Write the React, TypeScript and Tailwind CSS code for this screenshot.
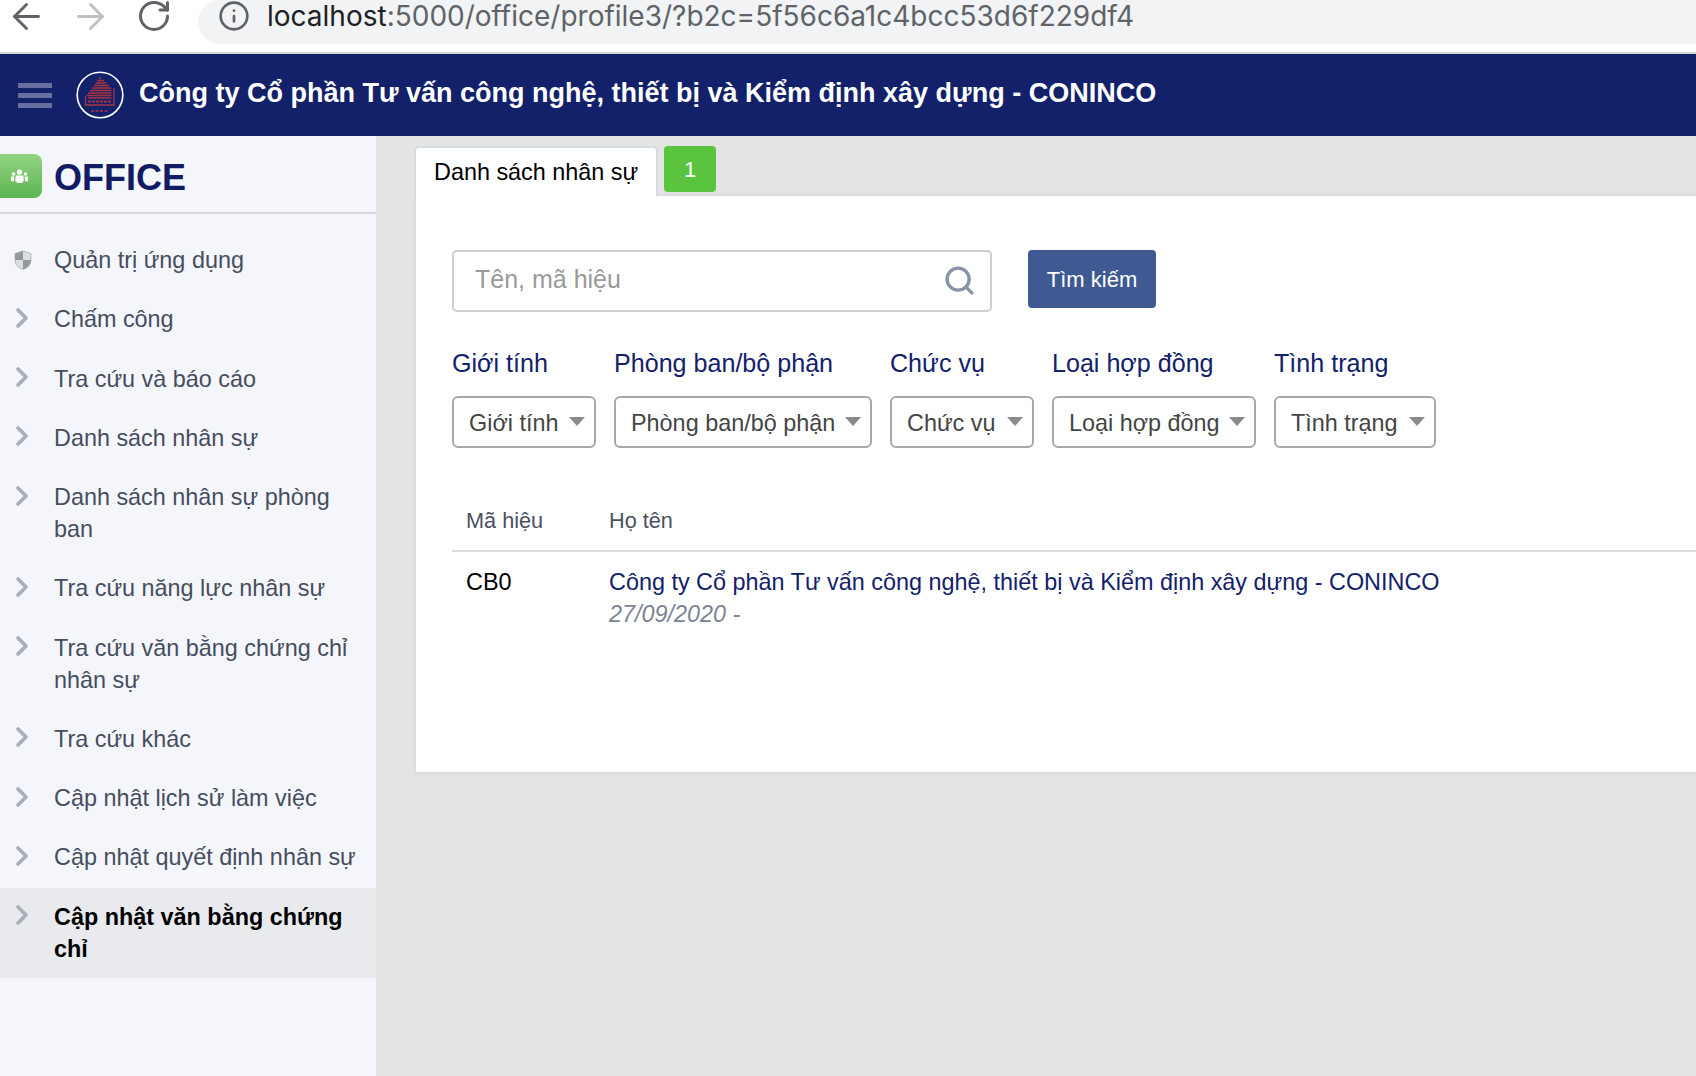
import React from 'react';
import { ArrowLeft, ArrowRight, RotateCw, Info, ChevronRight, Search } from 'lucide-react';

const SIDEBAR_ITEMS = [
  'Chấm công',
  'Tra cứu và báo cáo',
  'Danh sách nhân sự',
  'Danh sách nhân sự phòng ban',
  'Tra cứu năng lực nhân sự',
  'Tra cứu văn bằng chứng chỉ nhân sự',
  'Tra cứu khác',
  'Cập nhật lịch sử làm việc',
  'Cập nhật quyết định nhân sự',
];

const FILTERS = [
  { label: 'Giới tính', width: 'w-[144px]' },
  { label: 'Phòng ban/bộ phận', width: 'w-[258px]' },
  { label: 'Chức vụ', width: 'w-[144px]' },
  { label: 'Loại hợp đồng', width: 'w-[204px]' },
  { label: 'Tình trạng', width: 'w-[162px]' },
];

function Logo() {
  return (
    <svg width="48" height="48" viewBox="0 0 48 48" className="shrink-0">
      <circle cx="24" cy="24" r="22.8" fill="#12216a" stroke="#ffffff" strokeWidth="1.6" />
      <path
        d="M23 7h2M21 9.500h7M19.500 12h11M18 14.500h15M16 17h19M14 19.500h21.500M12 22h23.500M10.500 24.500h25"
        stroke="#a8343f"
        strokeWidth="1.4"
      />
      <path d="M38 17v17H9.500V25M35.500 27H12" stroke="#a8343f" strokeWidth="1.3" fill="none" />
      <path d="M12 30.500h24" stroke="#a8343f" strokeWidth="2.2" strokeDasharray="3 1" />
      <path d="M15 40h18" stroke="#a8343f" strokeWidth="1.6" strokeDasharray="3 1.5" />
    </svg>
  );
}

function UsersGlyph() {
  return (
    <svg width="19" height="15" viewBox="0 0 20 16" fill="#ffffff" className="-ml-[3px]">
      <circle cx="10" cy="3.2" r="2.8" />
      <circle cx="3.6" cy="5.4" r="1.9" />
      <circle cx="16.4" cy="5.4" r="1.9" />
      <path d="M6 7h8l.6 6-1.6.4V15H7v-1.6L5.4 13z" />
      <path d="M1 8h3.400L4 13H1zM15.600 8H19v5h-3z" />
    </svg>
  );
}

function ShieldGlyph() {
  return (
    <svg width="18" height="20" viewBox="0 0 17 19">
      <path d="M8.500 1 16 3.400v6c0 4.400-3 7.400-7.500 9C4 16.800 1 13.800 1 9.400v-6z" fill="#dcdee2" stroke="#a9acb3" strokeWidth="0.8" />
      <path d="M8.500 1 1 3.400v6h7.500zM8.500 9.400H16c0 4.400-3 7.400-7.500 9z" fill="#94979f" />
    </svg>
  );
}

function SidebarRow({ label, active }: { label: string; active?: boolean }) {
  return (
    <div className={`flex py-[13px] pr-3 mb-[1.25px] ${active ? 'bg-[#e9eaee]' : ''}`}>
      <div className="w-[54px] shrink-0 h-[32px] flex items-center pl-[6px]">
        <ChevronRight size={32} strokeWidth={2.8} className="text-[#a8aeba] shrink-0 -mt-[3px]" />
      </div>
      <span className={`text-[23.4px] leading-[32px] ${active ? 'font-bold text-black' : 'text-[#464d5e]'}`}>
        {label}
      </span>
    </div>
  );
}

export default function App() {
  return (
    <div className="h-screen w-full overflow-hidden flex flex-col bg-[#e4e4e4] font-['Liberation_Sans',Arial,sans-serif]">
      {/* Browser toolbar */}
      <div className="h-[54px] shrink-0 bg-white border-b-2 border-[#d6d6d6] flex items-start">
        <div className="w-[198px] shrink-0 h-[32px] flex items-center pl-[6px] gap-[23px] text-[#5f6368]">
          <ArrowLeft size={41} strokeWidth={1.7} className="shrink-0" />
          <ArrowRight size={41} strokeWidth={1.7} className="text-[#bdc1c6] shrink-0" />
          <RotateCw size={36} strokeWidth={2} className="shrink-0 ml-[2px]" />
        </div>
        <div className="flex-1 h-[44px] bg-[#f1f3f4] rounded-l-[24px] flex items-start pl-[20px] pt-[1px]">
          <Info size={32} strokeWidth={2} className="text-[#5f6368] -mt-[1px]" />
          <span className="ml-[17px] text-[28px] leading-[30px] font-['Inter',sans-serif] text-[#5f6368]">
            <span className="text-[#202124]">localhost</span>:5000/office/profile3/?b2c=5f56c6a1c4bcc53d6f229df4
          </span>
        </div>
      </div>

      {/* App header */}
      <div className="h-[82px] shrink-0 bg-[#12216a] flex items-center">
        <div className="w-[76px] shrink-0 pl-[18px] flex flex-col gap-[5px]">
          <div className="w-[34px] h-[5px] bg-[#676fa0]" />
          <div className="w-[34px] h-[5px] bg-[#676fa0]" />
          <div className="w-[34px] h-[5px] bg-[#676fa0]" />
        </div>
        <Logo />
        <div className="ml-[15px] -mt-[4px] text-[27px] font-bold text-white whitespace-nowrap">
          Công ty Cổ phần Tư vấn công nghệ, thiết bị và Kiểm định xây dựng - CONINCO
        </div>
      </div>

      <div className="flex-1 flex min-h-0">
        {/* Sidebar */}
        <div className="w-[376px] shrink-0 bg-[#f4f6fb]">
          <div className="h-[78px] border-b-2 border-[#d5d6da] flex items-start pt-[18px]">
            <div className="w-[42px] h-[44px] rounded-r-lg bg-gradient-to-b from-[#93d482] to-[#5ab552] flex items-center justify-center">
              <UsersGlyph />
            </div>
            <div className="ml-[12px] mt-[2px] text-[36px] leading-[44px] font-bold text-[#111c65]">OFFICE</div>
          </div>
          <div className="pt-[17px]">
            <div className="flex py-[13px] pr-3 mb-[1.25px]">
              <div className="w-[54px] shrink-0 h-[32px] flex items-center pl-[14px]">
                <ShieldGlyph />
              </div>
              <span className="text-[23.4px] leading-[32px] text-[#464d5e]">Quản trị ứng dụng</span>
            </div>
            {SIDEBAR_ITEMS.map(item => (
              <SidebarRow key={item} label={item} />
            ))}
            <SidebarRow label="Cập nhật văn bằng chứng chỉ" active />
          </div>
        </div>

        {/* Main */}
        <div className="flex-1 min-w-0 pl-[38px] pt-[10px]">
          <div className="flex items-start h-[48px]">
            <div className="w-[244px] h-[50px] relative z-10 bg-white border-2 border-b-0 border-[#d5dbe5] rounded-t-[5px] pl-[18px] pt-[9px] text-[23.4px] leading-[30px] text-black whitespace-nowrap">
              Danh sách nhân sự
            </div>
            <div className="ml-[6px] w-[52px] h-[46px] bg-[#5bc43f] rounded-[4px] flex items-center justify-center text-white text-[22px]">
              1
            </div>
          </div>
          <div className="h-[580px] bg-white border-t-2 border-l-2 border-b-2 border-[#d8dde6] pl-[36px] pt-[54px]">
            <div className="flex items-start">
              <div className="w-[540px] h-[62px] border-2 border-[#cfcfcf] rounded-[5px] flex items-center justify-between pl-[21px] pr-[14px]">
                <span className="text-[25px] -mt-[2px] text-[#9a9a9a]">Tên, mã hiệu</span>
                <Search size={33} strokeWidth={2.5} className="text-[#8a92a6] -mt-[2px]" />
              </div>
              <button className="ml-[36px] w-[128px] h-[58px] bg-[#3f5a92] rounded-[4px] text-white text-[22px]">
                Tìm kiếm
              </button>
            </div>

            <div className="flex gap-[18px] mt-[36px]">
              {FILTERS.map(f => (
                <div key={f.label} className={f.width}>
                  <div className="text-[25.1px] leading-[30px] text-[#12216a] whitespace-nowrap">{f.label}</div>
                  <div className="mt-[18px] h-[52px] border-2 border-[#a8a8a8] rounded-[6px] flex items-center justify-between pl-[15px] pr-[9px]">
                    <span className="text-[23.4px] mt-[4px] text-[#444444] whitespace-nowrap">{f.label}</span>
                    <span className="w-0 h-0 -mt-[2px] border-x-[8px] border-x-transparent border-t-[9px] border-t-[#8a8a8a]" />
                  </div>
                </div>
              ))}
            </div>

            <div className="mt-[54px] border-b-2 border-[#dcdcdc] h-[50px] flex text-[21.7px] text-[#4a5160] leading-[38px]">
              <div className="w-[157px] pl-[14px]">Mã hiệu</div>
              <div>Họ tên</div>
            </div>
            <div className="flex pt-[14px]">
              <div className="w-[157px] pl-[14px] text-[23.4px] leading-[32px] text-black">CB0</div>
              <div>
                <div className="text-[23.4px] leading-[32px] text-[#12216a] whitespace-nowrap">
                  Công ty Cổ phần Tư vấn công nghệ, thiết bị và Kiểm định xây dựng - CONINCO
                </div>
                <div className="text-[23.4px] leading-[32px] italic text-[#7c8494]">27/09/2020 -</div>
              </div>
            </div>
          </div>
        </div>
      </div>
    </div>
  );
}
